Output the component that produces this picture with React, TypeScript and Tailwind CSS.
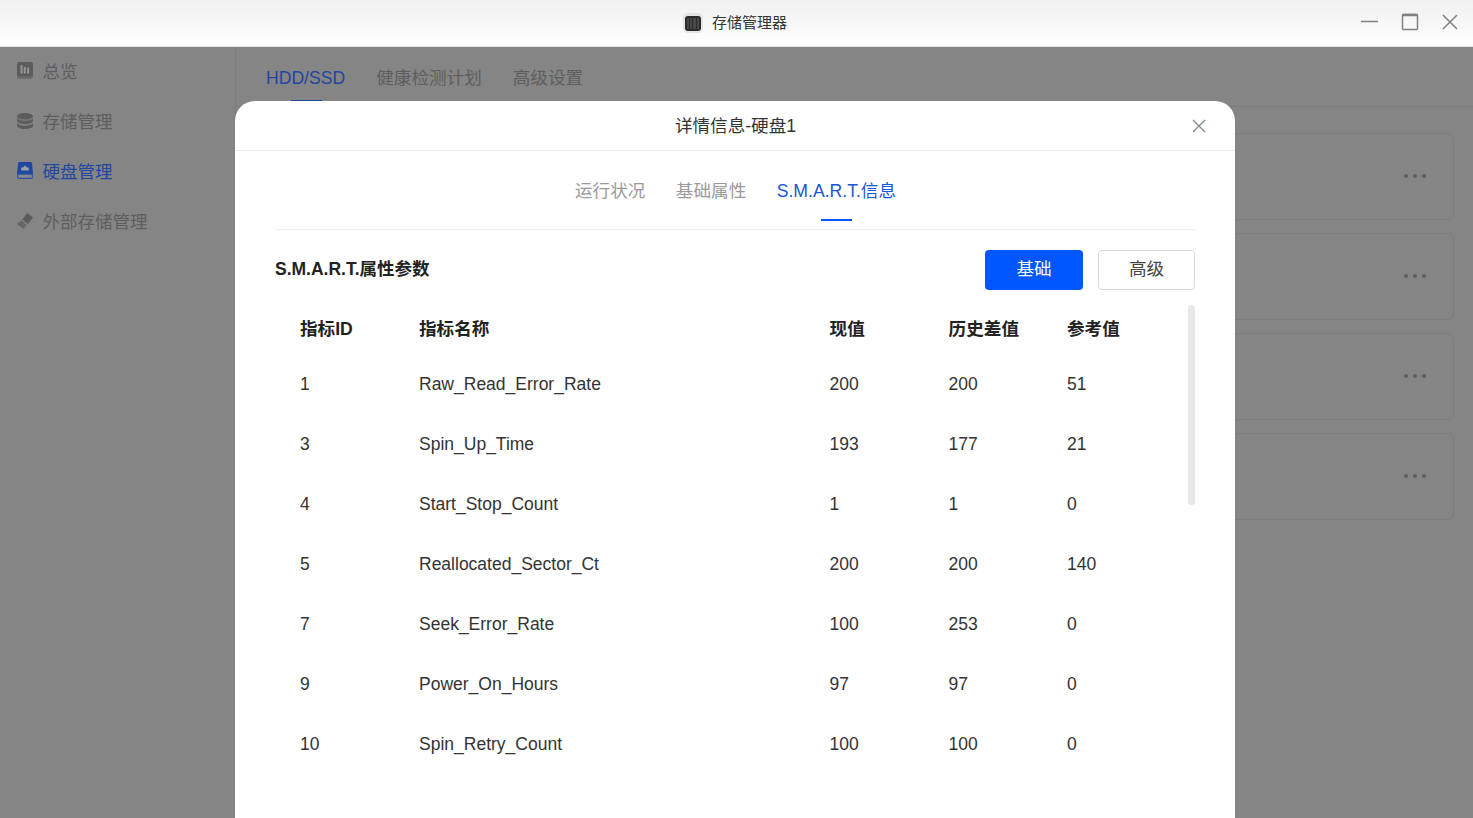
const FONT = "font-['Liberation_Sans','Noto_Sans_CJK_SC',sans-serif]";

const ROWS = [
  ["1", "Raw_Read_Error_Rate", "200", "200", "51"],
  ["3", "Spin_Up_Time", "193", "177", "21"],
  ["4", "Start_Stop_Count", "1", "1", "0"],
  ["5", "Reallocated_Sector_Ct", "200", "200", "140"],
  ["7", "Seek_Error_Rate", "100", "253", "0"],
  ["9", "Power_On_Hours", "97", "97", "0"],
  ["10", "Spin_Retry_Count", "100", "100", "0"],
];

function OverviewIcon() {
  return (
    <svg width="16" height="17" viewBox="0 0 16 17" fill="none">
      <rect y="2" width="16" height="15" rx="2" fill="#6e6e6e" />
      <rect width="16" height="14.500" rx="2" fill="#5c5c5c" />
      <path d="M3.500 3h2v8.500h-2zM6.800 5h2v6.500h-2zM10.100 5.500h2v6h-2z" fill="#959595" />
    </svg>
  );
}

function StorageIcon() {
  return (
    <svg width="16" height="16" viewBox="0 0 16 16" fill="#5c5c5c">
      <ellipse cx="8" cy="3.300" rx="8" ry="3.300" />
      <path d="M0 5.300C1.400 7 4.400 7.800 8 7.800s6.600-.8 8-2.500v2.500c0 1.800-3.600 3.200-8 3.200S0 9.600 0 7.800z" />
      <path d="M0 10.300c1.400 1.600 4.400 2.500 8 2.500s6.600-.9 8-2.500v2.500c0 1.800-3.600 3.200-8 3.200s-8-1.400-8-3.200z" />
    </svg>
  );
}

function DiskIcon() {
  return (
    <svg width="16" height="17" viewBox="0 0 16 17" fill="none">
      <path d="M2.500 0h11A1.500 1.500 0 0 1 15 1.500L16 12H0L1 1.500A1.500 1.500 0 0 1 2.500 0z" fill="#1f46a0" />
      <rect x=".6" y="12.200" width="14.800" height="4.200" rx="1.500" fill="#85898f" stroke="#2f52a5" strokeWidth="1.200" />
      <path d="M8 3.200l2 2.400h1.800v2.900H4.200V5.600H6z" fill="#9aa0ac" />
    </svg>
  );
}

function ExternalIcon() {
  return (
    <svg width="16" height="16" viewBox="0 0 16 16" fill="#5c5c5c">
      <path d="M11 .4l4.500 3.700a.8.800 0 0 1 .1 1.100L10.700 11 5.200 6.400 9.900.5A.8.800 0 0 1 11 .4z" />
      <path d="M4.400 7.400l5.400 4.500-2.600 3.200a1 1 0 0 1-1.400.1L.6 11.700a1 1 0 0 1-.1-1.400z" fill="#666" />
    </svg>
  );
}

function NavItem({ icon, label, active }: { icon: React.ReactNode; label: string; active?: boolean }) {
  return (
    <div className={`flex h-[50px] items-center gap-[9.500px] pl-[17px] text-[17.500px] ${active ? "text-[#1f46a0]" : "text-[#5e5e5e]"}`}>
      <span className="mb-[3px] flex w-4 justify-center">{icon}</span>
      <span>{label}</span>
    </div>
  );
}

function BackgroundCard() {
  return (
    <div className="flex h-[87px] items-center justify-end rounded-md border border-[#7d7d7d] pb-[2px] pr-[27px]">
      <div className="flex gap-[5px]">
        <span className="h-1 w-1 rounded-full bg-[#5e5e5e]" />
        <span className="h-1 w-1 rounded-full bg-[#5e5e5e]" />
        <span className="h-1 w-1 rounded-full bg-[#5e5e5e]" />
      </div>
    </div>
  );
}

function DetailModal() {
  return (
    <div className="absolute left-[235px] top-[101px] h-[717px] w-[1000px] rounded-t-[20px] bg-white">
      <div className="relative flex h-[50px] items-center justify-center border-b border-[#ebebeb] pl-[1px] pt-[1px] text-[17.600px] text-[#333]">
        详情信息-硬盘1
        <svg className="absolute right-[29px] top-[18px]" width="14" height="14" viewBox="0 0 14 14" fill="none" stroke="#808890" strokeWidth="1.300">
          <path d="M1 1l12 12M13 1L1 13" />
        </svg>
      </div>

      <div className="mx-10 flex h-[79px] justify-center gap-[30.500px] border-b border-[#efefef] pl-[1px] pt-[28px] text-[17.600px] leading-[24px] text-[#9a9a9a]">
        <span>运行状况</span>
        <span>基础属性</span>
        <span className="relative text-[#1a56d6]">
          S.M.A.R.T.信息
          <span className="absolute left-[44px] top-[40px] h-[2px] w-[31px] bg-[#0b57ff]" />
        </span>
      </div>

      <div className="mx-10 mt-5 flex h-10 items-center justify-between">
        <span className="mb-[2px] text-[17.500px] font-bold text-[#222]">S.M.A.R.T.属性参数</span>
        <div className="flex gap-[15px] text-[17.600px]">
          <button className="h-10 w-[98px] rounded bg-[#0057ff] pb-[2px] text-white">基础</button>
          <button className="h-10 w-[97px] rounded border border-[#d9d9d9] bg-white pb-[2px] text-[#444]">高级</button>
        </div>
      </div>

      <div className="relative mx-10 mt-[15px]">
        <div className="grid grid-cols-[119px_410.600px_119px_118.400px_1fr] pl-[25px] text-[17.500px] text-[#333]">
          {["指标ID", "指标名称", "现值", "历史差值", "参考值"].map((h) => (
            <div key={h} className="flex h-[49px] items-center text-[17.600px] font-bold text-[#222]">{h}</div>
          ))}
          {ROWS.map((row) =>
            row.map((cell, i) => (
              <div key={row[0] + i} className="flex h-[60px] items-center">{cell}</div>
            )),
          )}
        </div>
        <div className="absolute right-0 top-0 h-[200px] w-[7px] rounded bg-[#e8e8e8]" />
      </div>
    </div>
  );
}

export default function App() {
  return (
    <div className={`relative h-[818px] w-[1473px] overflow-hidden bg-[#858585] ${FONT}`}>
      <header className="relative flex h-[47px] items-center justify-center gap-[9px] border-b border-[#e5e5e5] bg-gradient-to-b from-[#f0f0f0] to-white pr-[3px] text-[15px] text-[#333]">
        <span className="flex h-[20px] w-[20px] items-center justify-center rounded-[5px] bg-[#e4e4e4]">
          <span className="flex h-[15px] w-[16px] justify-center gap-[1px] rounded-[3px] bg-[#2b2b2b] px-[2px] py-[2px]">
            <span className="flex-1 bg-[#484848]" />
            <span className="flex-1 bg-[#484848]" />
            <span className="flex-1 bg-[#484848]" />
            <span className="flex-1 bg-[#484848]" />
          </span>
        </span>
        <span>存储管理器</span>
        <svg className="absolute right-[14px] top-[13px]" width="98" height="18" viewBox="0 0 98 18" fill="none" stroke="#808080" strokeWidth="1.500">
          <path d="M0 8.500h17" />
          <rect x="41.500" y="1.500" width="15" height="15" rx="1" />
          <path d="M41.500 2h15" strokeWidth="2.500" />
          <path d="M82 2l14 14M96 2L82 16" />
        </svg>
      </header>

      <div className="flex h-[771px]">
        <aside className="w-[236px] shrink-0 border-r border-[#7d7d7d]">
          <NavItem icon={<OverviewIcon />} label="总览" />
          <NavItem icon={<StorageIcon />} label="存储管理" />
          <NavItem icon={<DiskIcon />} label="硬盘管理" active />
          <NavItem icon={<ExternalIcon />} label="外部存储管理" />
        </aside>

        <main className="flex-1">
          <nav className="flex h-[60px] gap-[31px] border-b border-[#7d7d7d] pl-[30px] pt-[19px] text-[17.600px] leading-[24px] text-[#5e5e5e]">
            <span className="relative text-[#1f46a0]">
              HDD/SSD
              <span className="absolute left-[25px] top-[34px] h-[2px] w-[31px] bg-[#1f46a0]" />
            </span>
            <span>健康检测计划</span>
            <span>高级设置</span>
          </nav>
          <div className="flex flex-col gap-[13px] pl-[30px] pr-[19px] pt-[26px]">
            <BackgroundCard />
            <BackgroundCard />
            <BackgroundCard />
            <BackgroundCard />
          </div>
        </main>
      </div>

      <DetailModal />
    </div>
  );
}
